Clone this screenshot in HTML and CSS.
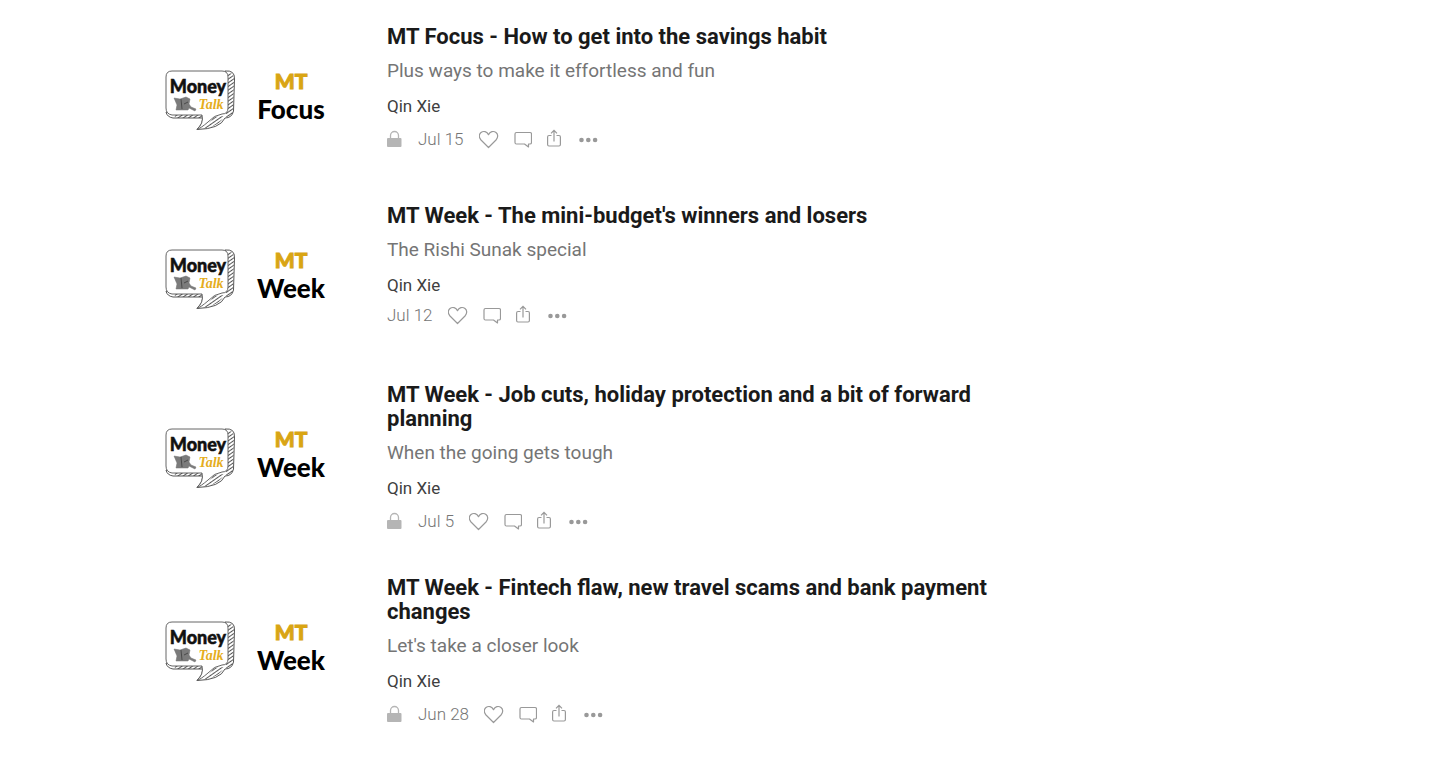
FILE: index.html
```
<!DOCTYPE html>
<html lang="en">
<head>
<meta charset="utf-8">
<meta name="viewport" content="width=device-width, initial-scale=1">
<title>Money Talk archive</title>
<link rel="stylesheet" href="styles.css">
</head>
<body>
<svg class="symbols" aria-hidden="true">
  <defs>
    <pattern id="hatch" width="3" height="3" patternUnits="userSpaceOnUse" patternTransform="rotate(-35)"><path d="M0 1.5H3" stroke="#444" stroke-width=".9"/></pattern>
    <pattern id="shade" width="2" height="2" patternUnits="userSpaceOnUse" patternTransform="rotate(65)"><path d="M0 1H2" stroke="#444" stroke-width=".6"/></pattern>
  </defs>
  <symbol id="brand" viewBox="0 0 100 150">
    <path d="M79 46Q89 45 88.500 54L87.500 86Q86 93 79 93Q74 104 51 104.500Q57 99 57 93H27Q21 92 20 87L79 88Z" fill="#fff" stroke="#444" stroke-width=".9"/>
    <path d="M82 48Q88 47 88 54L87 86Q86 92 80 92V88Q82 86 82 82ZM78 91Q74 102 54 104Q63 100 68 92ZM27 89H57V93H30Z" fill="url(#hatch)"/>
    <path d="M26 46H76Q82 46 82 52V83Q82 89 76 89Q68 90 62 97Q55 103 51 104.500Q58 98 56 90H26Q20 89 20 83V52Q20 46 26 46Z" fill="#fff" stroke="#555" stroke-width=".9"/>
    <path d="M28 73L34 74L40 72L44 74L43 79L45 82L50 84L49 86L43 83L42 85H30L31 80Z" fill="#929292"/>
    <path d="M28 73L34 74L40 72L44 74L43 79L45 82L50 84L49 86L43 83L42 85H30L31 80Z" fill="url(#shade)" stroke="#777" stroke-width=".5"/>
    <path d="M35 74L36 84M38 79L42 77" stroke="#444" stroke-width=".9"/>
  </symbol>
  <symbol id="lock" viewBox="0 0 16 20"><path d="M3.500 10V6.500a4 4 0 0 1 8 0V10" fill="none" stroke="#b5b5b5" stroke-width="1.300"/><rect x="0" y="9" width="14.500" height="9" rx="1" fill="#b5b5b5"/></symbol>
  <symbol id="heart" viewBox="0 0 20 20"><path d="M9.500 18.500L2 11C-.5 8.300 0 5 2 3.500C4.500 1.600 8 2.500 9.500 5.700C11 2.500 14.500 1.600 17 3.500C19 5 19.500 8.300 17 11Z" fill="none" stroke="#999" stroke-width="1.200" stroke-linejoin="round"/></symbol>
  <symbol id="comment" viewBox="0 0 18 20"><path d="M2.500 3.500H16Q17.500 3.500 17.500 5V13.500Q17.500 15 16 15H14.500V18L10.500 15H2.500Q1 15 1 13.500V5Q1 3.500 2.500 3.500Z" fill="none" stroke="#999" stroke-width="1.200" stroke-linejoin="round"/></symbol>
  <symbol id="share" viewBox="0 0 14 20"><path d="M4.500 6.500H2Q.6 6.500 .6 8V15.500Q.6 17 2 17H12Q13.400 17 13.400 15.500V8Q13.400 6.500 12 6.500H9.500M7 12.500V1.500M4 4.300L7 1.300L10 4.300" fill="none" stroke="#999" stroke-width="1.200"/></symbol>
  <symbol id="more" viewBox="0 0 22 20"><g fill="#999"><circle cx="5.500" cy="11" r="2.300"/><circle cx="12.300" cy="11" r="2.300"/><circle cx="19.100" cy="11" r="2.300"/></g></symbol>
</svg>
<main class="archive">
  <article class="post">
    <svg class="thumb" viewBox="0 0 200 150" role="img" aria-label="Money Talk, MT Focus"><use href="#brand" width="100" height="150"/><text class="brand-name" x="52" y="68">Money</text><text class="brand-script" x="65" y="84">Talk</text><text class="label gold" x="145" y="64">MT</text><text class="label" x="145" y="94">Focus</text></svg>
    <div class="body">
      <a class="title" href="#">MT Focus - How to get into the savings habit</a>
      <a class="subtitle" href="#">Plus ways to make it effortless and fun</a>
      <a class="author" href="#">Qin Xie</a>
      <div class="meta locked"><svg class="icon lock"><use href="#lock"/></svg><time>Jul 15</time><button aria-label="Like"><svg class="icon heart"><use href="#heart"/></svg></button><button aria-label="Comment"><svg class="icon comment"><use href="#comment"/></svg></button><button aria-label="Share"><svg class="icon share"><use href="#share"/></svg></button><button aria-label="More"><svg class="icon more"><use href="#more"/></svg></button></div>
    </div>
  </article>
  <article class="post">
    <svg class="thumb" viewBox="0 0 200 150" role="img" aria-label="Money Talk, MT Week"><use href="#brand" width="100" height="150"/><text class="brand-name" x="52" y="68">Money</text><text class="brand-script" x="65" y="84">Talk</text><text class="label gold" x="145" y="64">MT</text><text class="label" x="145" y="94">Week</text></svg>
    <div class="body">
      <a class="title" href="#">MT Week - The mini-budget's winners and losers</a>
      <a class="subtitle" href="#">The Rishi Sunak special</a>
      <a class="author" href="#">Qin Xie</a>
      <div class="meta"><time>Jul 12</time><button aria-label="Like"><svg class="icon heart"><use href="#heart"/></svg></button><button aria-label="Comment"><svg class="icon comment"><use href="#comment"/></svg></button><button aria-label="Share"><svg class="icon share"><use href="#share"/></svg></button><button aria-label="More"><svg class="icon more"><use href="#more"/></svg></button></div>
    </div>
  </article>
  <article class="post">
    <svg class="thumb" viewBox="0 0 200 150" role="img" aria-label="Money Talk, MT Week"><use href="#brand" width="100" height="150"/><text class="brand-name" x="52" y="68">Money</text><text class="brand-script" x="65" y="84">Talk</text><text class="label gold" x="145" y="64">MT</text><text class="label" x="145" y="94">Week</text></svg>
    <div class="body">
      <a class="title" href="#">MT Week - Job cuts, holiday protection and a bit of forward planning</a>
      <a class="subtitle" href="#">When the going gets tough</a>
      <a class="author" href="#">Qin Xie</a>
      <div class="meta locked"><svg class="icon lock"><use href="#lock"/></svg><time>Jul 5</time><button aria-label="Like"><svg class="icon heart"><use href="#heart"/></svg></button><button aria-label="Comment"><svg class="icon comment"><use href="#comment"/></svg></button><button aria-label="Share"><svg class="icon share"><use href="#share"/></svg></button><button aria-label="More"><svg class="icon more"><use href="#more"/></svg></button></div>
    </div>
  </article>
  <article class="post">
    <svg class="thumb" viewBox="0 0 200 150" role="img" aria-label="Money Talk, MT Week"><use href="#brand" width="100" height="150"/><text class="brand-name" x="52" y="68">Money</text><text class="brand-script" x="65" y="84">Talk</text><text class="label gold" x="145" y="64">MT</text><text class="label" x="145" y="94">Week</text></svg>
    <div class="body">
      <a class="title" href="#">MT Week - Fintech flaw, new travel scams and bank payment changes</a>
      <a class="subtitle" href="#">Let's take a closer look</a>
      <a class="author" href="#">Qin Xie</a>
      <div class="meta locked"><svg class="icon lock"><use href="#lock"/></svg><time>Jun 28</time><button aria-label="Like"><svg class="icon heart"><use href="#heart"/></svg></button><button aria-label="Comment"><svg class="icon comment"><use href="#comment"/></svg></button><button aria-label="Share"><svg class="icon share"><use href="#share"/></svg></button><button aria-label="More"><svg class="icon more"><use href="#more"/></svg></button></div>
    </div>
  </article>
</main>
</body>
</html>
```

FILE: styles.css
```
* { box-sizing: border-box; }
body { margin: 0; background: #fff; font-family: Roboto, sans-serif; }
.symbols { position: absolute; width: 0; height: 0; }
.archive {
  display: flex;
  flex-direction: column;
  gap: 29px;
  max-width: 1145px;
  margin: 0 auto;
  padding: 25px 0 24px;
}
.post { display: grid; grid-template-columns: 200px minmax(0, 640px); column-gap: 41px; }
.thumb { width: 200px; height: 150px; }
.label { font: 900 26px Lato, sans-serif; text-anchor: middle; fill: #000; }
.label.gold { font-size: 21px; fill: #d9a514; stroke: #d9a514; }
.brand-name { font: 900 18px Lato, sans-serif; text-anchor: middle; fill: #111; stroke: #111; stroke-width: 0.5; }
.brand-script { font: italic bold 14px "Liberation Serif", serif; text-anchor: middle; fill: #e5ad20; }
.body { display: flex; flex-direction: column; align-items: flex-start; padding-bottom: 12px; }
.body a { text-decoration: none; }
.title { font-size: 22px; line-height: 24px; font-weight: 700; color: #1a1a1a; }
.subtitle { margin-top: 10px; font-size: 19px; line-height: 24px; color: #757575; }
.author { margin-top: 13px; font-size: 17px; line-height: 20px; color: #404040; }
.meta {
  display: flex;
  align-items: center;
  gap: 15px;
  height: 22px;
  margin-top: 9px;
  font-size: 17px;
  line-height: 22px;
  font-weight: 300;
  color: #757575;
}
.meta.locked { height: 28px; }
.meta button { display: flex; padding: 0; border: 0; background: none; cursor: pointer; }
.icon { display: block; height: 20px; }
.lock { width: 16px; }
.heart { width: 20px; }
.comment { width: 18px; }
.share { width: 14px; }
.more { width: 22px; }
```
